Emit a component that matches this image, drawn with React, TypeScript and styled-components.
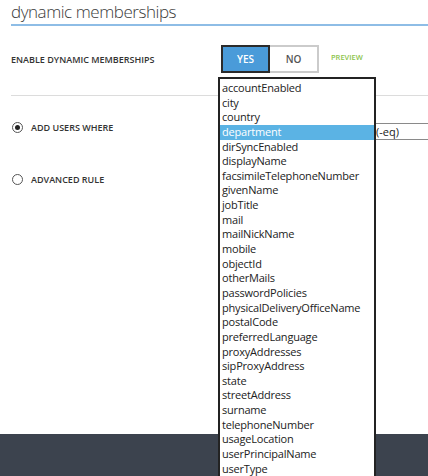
import styled, { createGlobalStyle } from "styled-components";

const GlobalStyle = createGlobalStyle`
  html, body {
    margin: 0;
    padding: 0;
    height: 476px;
    overflow: hidden;
    background: #fff;
  }
  body {
    font-family: "Open Sans", "Liberation Sans", sans-serif;
    color: #333;
  }
`;

const Page = styled.div`
  position: relative;
  height: 476px;
  display: flex;
  flex-direction: column;
`;

const Main = styled.div`
  flex: 1;
  padding-left: 11px;
`;

const Title = styled.h1`
  margin: 0;
  padding-top: 2px;
  height: 23px;
  box-sizing: border-box;
  font-family: "Open Sans", sans-serif;
  font-size: 17px;
  font-weight: 300;
  line-height: 19px;
  letter-spacing: -0.45px;
  color: #3a3a3a;
`;

const TitleRule = styled.div`
  margin-top: 1px;
  height: 2px;
  background: #8ebde6;
`;

const EnableRow = styled.div`
  display: flex;
  align-items: center;
  margin-top: 19px;
  height: 28px;
`;

const SectionLabel = styled.div`
  width: 210px;
  font-size: 9px;
  font-weight: 600;
  text-transform: uppercase;
  color: #333;
`;

const Toggle = styled.div`
  display: flex;
  height: 28px;
`;

const ToggleButton = styled.button<{ $active?: boolean }>`
  width: 49px;
  height: 28px;
  box-sizing: border-box;
  padding: 0;
  font-family: inherit;
  font-size: 10px;
  font-weight: 600;
  text-transform: uppercase;
  cursor: pointer;
  background: ${(p) => (p.$active ? "#4a9bd9" : "#fff")};
  color: ${(p) => (p.$active ? "#fff" : "#555")};
  border: 2px solid ${(p) => (p.$active ? "#2b2b2b" : "#cbcbcb")};
  ${(p) => (p.$active ? "" : "border-left: none;")}
`;

const Preview = styled.span`
  margin-left: 12px;
  margin-top: -4px;
  font-size: 7.5px;
  font-weight: 600;
  color: #8cc44a;
`;

const Divider = styled.div`
  margin-top: 22px;
  height: 1px;
  background: #dcdcdc;
`;

const RuleRow = styled.div<{ $top: number }>`
  display: flex;
  align-items: center;
  margin-top: ${(p) => p.$top}px;
  height: 18px;
`;

const RadioLabel = styled.label`
  display: flex;
  align-items: center;
  width: 209px;
  font-size: 9px;
  font-weight: 600;
  text-transform: uppercase;
  color: #333;
`;

const Radio = styled.span<{ $checked?: boolean }>`
  width: 11px;
  height: 11px;
  box-sizing: border-box;
  margin-left: 1px;
  margin-right: 8px;
  border: 1px solid #555;
  border-radius: 50%;
  display: flex;
  align-items: center;
  justify-content: center;
  &::after {
    content: "";
    width: 5px;
    height: 5px;
    border-radius: 50%;
    background: ${(p) => (p.$checked ? "#222" : "transparent")};
  }
`;

const FieldBox = styled.div<{ $width?: number }>`
  ${(p) => (p.$width ? `width: ${p.$width}px;` : "flex: 1;")}
  height: 17px;
  box-sizing: border-box;
  margin-top: 8px;
  border-top: 1px solid #8a8a8a;
  border-bottom: 1px solid #8a8a8a;
  font-size: 11px;
  line-height: 15px;
  padding-left: 1px;
  color: #222;
  white-space: nowrap;
  overflow: hidden;
`;

const Footer = styled.div`
  height: 42px;
  background: #3c434e;
`;

const ListBox = styled.ul`
  position: absolute;
  left: 218px;
  top: 77px;
  width: 158px;
  box-sizing: border-box;
  margin: 0;
  padding: 2px 0 0;
  list-style: none;
  background: #fff;
  border: 2px solid #232323;
  border-bottom: none;
  height: 399px;
  overflow: hidden;
`;

const ListItem = styled.li<{ $selected?: boolean }>`
  height: 14.65px;
  line-height: 14.65px;
  padding-left: 2px;
  font-size: 11px;
  letter-spacing: -0.2px;
  white-space: nowrap;
  background: ${(p) => (p.$selected ? "#5bb3e4" : "transparent")};
  color: ${(p) => (p.$selected ? "#fff" : "#222")};
`;

const attributes = [
  "accountEnabled",
  "city",
  "country",
  "department",
  "dirSyncEnabled",
  "displayName",
  "facsimileTelephoneNumber",
  "givenName",
  "jobTitle",
  "mail",
  "mailNickName",
  "mobile",
  "objectId",
  "otherMails",
  "passwordPolicies",
  "physicalDeliveryOfficeName",
  "postalCode",
  "preferredLanguage",
  "proxyAddresses",
  "sipProxyAddress",
  "state",
  "streetAddress",
  "surname",
  "telephoneNumber",
  "usageLocation",
  "userPrincipalName",
  "userType",
];

export default function App() {
  return (
    <>
      <GlobalStyle />
      <Page>
        <Main>
          <Title>dynamic memberships</Title>
          <TitleRule />
          <EnableRow>
            <SectionLabel>Enable dynamic memberships</SectionLabel>
            <Toggle>
              <ToggleButton $active>Yes</ToggleButton>
              <ToggleButton>No</ToggleButton>
            </Toggle>
            <Preview>PREVIEW</Preview>
          </EnableRow>
          <Divider />
          <RuleRow $top={22}>
            <RadioLabel>
              <Radio $checked />
              Add users where
            </RadioLabel>
            <FieldBox $width={155}>department</FieldBox>
            <FieldBox>(-eq)</FieldBox>
          </RuleRow>
          <RuleRow $top={34}>
            <RadioLabel>
              <Radio />
              Advanced rule
            </RadioLabel>
          </RuleRow>
        </Main>
        <Footer />
        <ListBox>
          {attributes.map((a) => (
            <ListItem key={a} $selected={a === "department"}>
              {a}
            </ListItem>
          ))}
        </ListBox>
      </Page>
    </>
  );
}
